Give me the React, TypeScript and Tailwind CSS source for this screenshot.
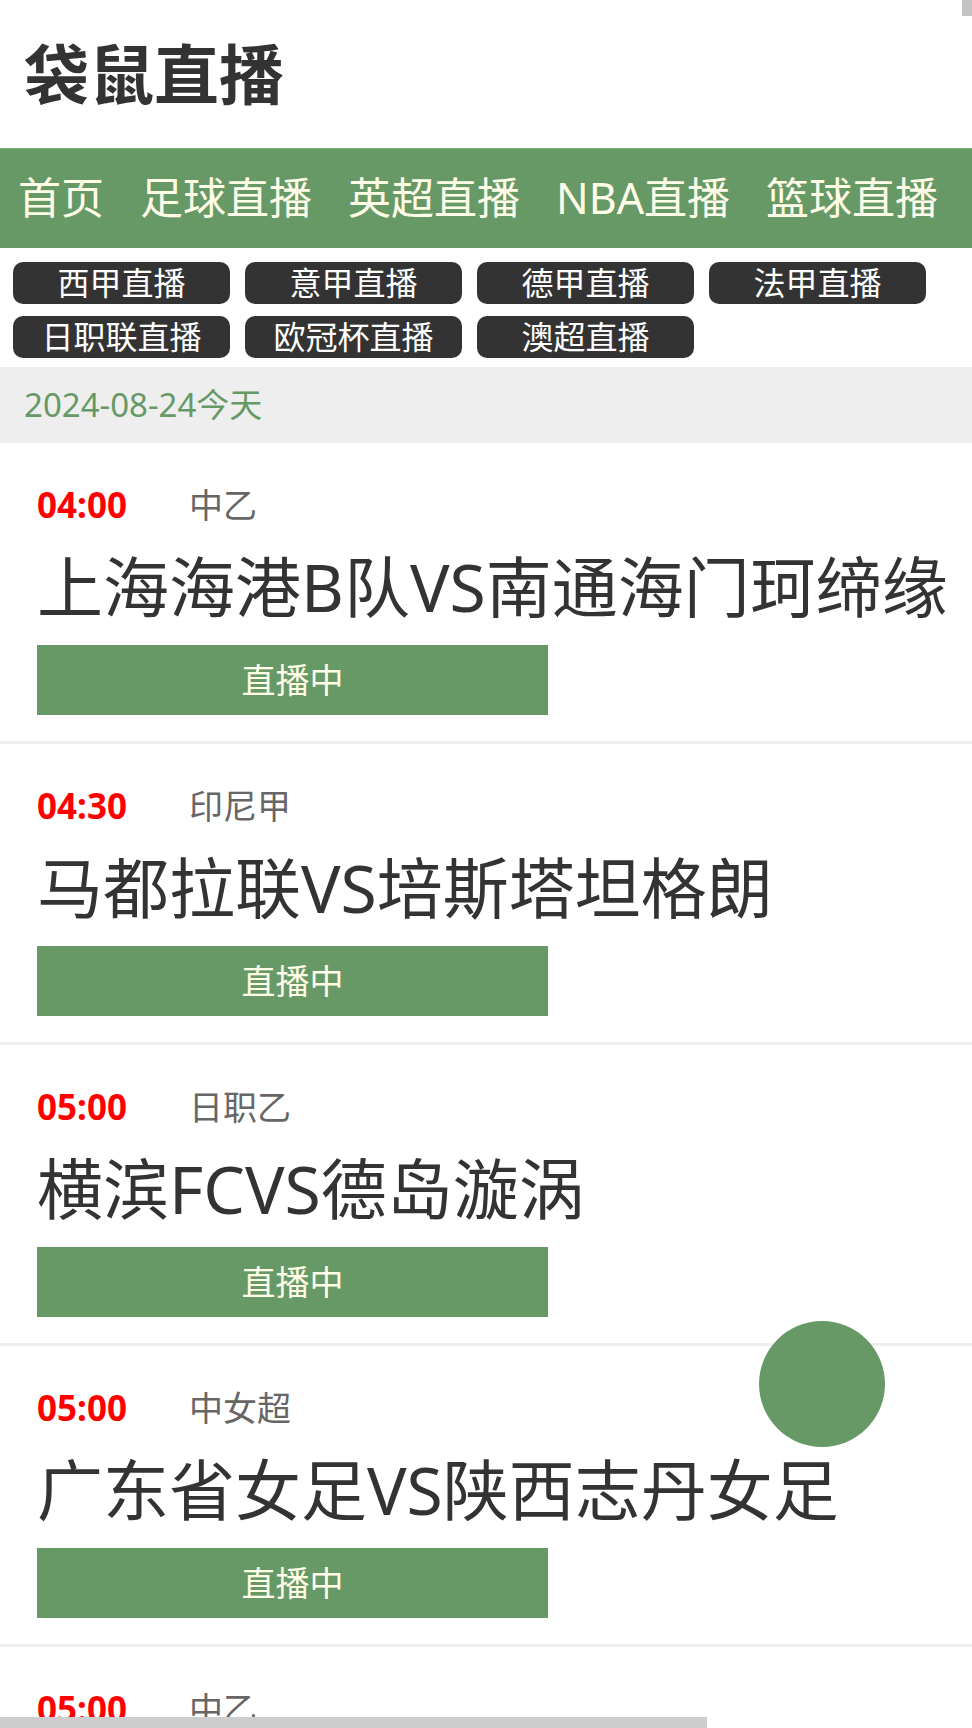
const font = { fontFamily: '"Noto Sans", "Noto Sans CJK SC", sans-serif' };

const navItems = ['首页', '足球直播', '英超直播', 'NBA直播', '篮球直播'];
const leagues = ['西甲直播', '意甲直播', '德甲直播', '法甲直播', '日职联直播', '欧冠杯直播', '澳超直播'];

const matches = [
  { time: '04:00', league: '中乙', title: '上海海港B队VS南通海门珂缔缘' },
  { time: '04:30', league: '印尼甲', title: '马都拉联VS培斯塔坦格朗' },
  { time: '05:00', league: '日职乙', title: '横滨FCVS德岛漩涡' },
  { time: '05:00', league: '中女超', title: '广东省女足VS陕西志丹女足' },
  { time: '05:00', league: '中乙', title: '大连鲲城VS广西平果哈嘹' },
  { time: '06:00', league: '巴西甲', title: '弗拉门戈VS博塔弗戈' },
];

function MatchRow({ time, league, title }: { time: string; league: string; title: string }) {
  return (
    <div className="px-[37px] pt-[38px] pb-[26px] border-b-[3px] border-[#eeeeee]">
      <div className="flex items-center h-[48px] text-[35px]">
        <span className="w-[152px] font-bold text-[#ff0000]">{time}</span>
        <span className="text-[34px] text-[#666666]">{league}</span>
      </div>
      <div className="mt-[17px] text-[66px] leading-[80px] text-[#333333] whitespace-nowrap">{title}</div>
      <div className="mt-[19px] w-[511px] h-[70px] bg-[#669966] flex items-center justify-center text-[34px] text-[#fffde8]">
        直播中
      </div>
    </div>
  );
}

export default function App() {
  return (
    <div className="min-h-screen bg-white" style={font}>
      {/* header */}
      <div className="h-[148px] flex items-center pl-[24px]">
        <h1 className="text-[65px] font-bold text-[#333333] leading-none">袋鼠直播</h1>
      </div>

      {/* main nav */}
      <nav className="h-[100px] bg-[#669966] flex items-center pl-[18px] gap-[36px] border-t border-[#7aab79]">
        {navItems.map((item) => (
          <a key={item} href="#" className="text-[43px] text-[#fffde8] whitespace-nowrap">
            {item}
          </a>
        ))}
      </nav>

      {/* leagues */}
      <div className="flex flex-wrap gap-x-[15px] gap-y-[12px] pl-[13px] pt-[14px] pb-[9px]">
        {leagues.map((l) => (
          <a
            key={l}
            href="#"
            className="w-[217px] h-[42px] rounded-[10px] bg-[#333333] text-white text-[32px] flex items-center justify-center"
          >
            {l}
          </a>
        ))}
      </div>

      {/* date */}
      <div className="h-[76px] bg-[#eeeeee] flex items-center pl-[24px] text-[33px] text-[#669966]">
        2024-08-24今天
      </div>

      {/* list */}
      <div>
        {matches.map((m, i) => (
          <MatchRow key={i} {...m} />
        ))}
      </div>

      {/* floating button */}
      <div className="fixed right-[87px] bottom-[281px] w-[126px] h-[126px] rounded-full bg-[#669966]" />

      {/* scrollbar thumbs */}
      <div className="fixed top-0 right-0 w-[10px] h-[16px] bg-[#c4c4c4]" />
      <div className="fixed bottom-0 left-0 w-[707px] h-[11px] bg-[#cdcdcd]" />
    </div>
  );
}
